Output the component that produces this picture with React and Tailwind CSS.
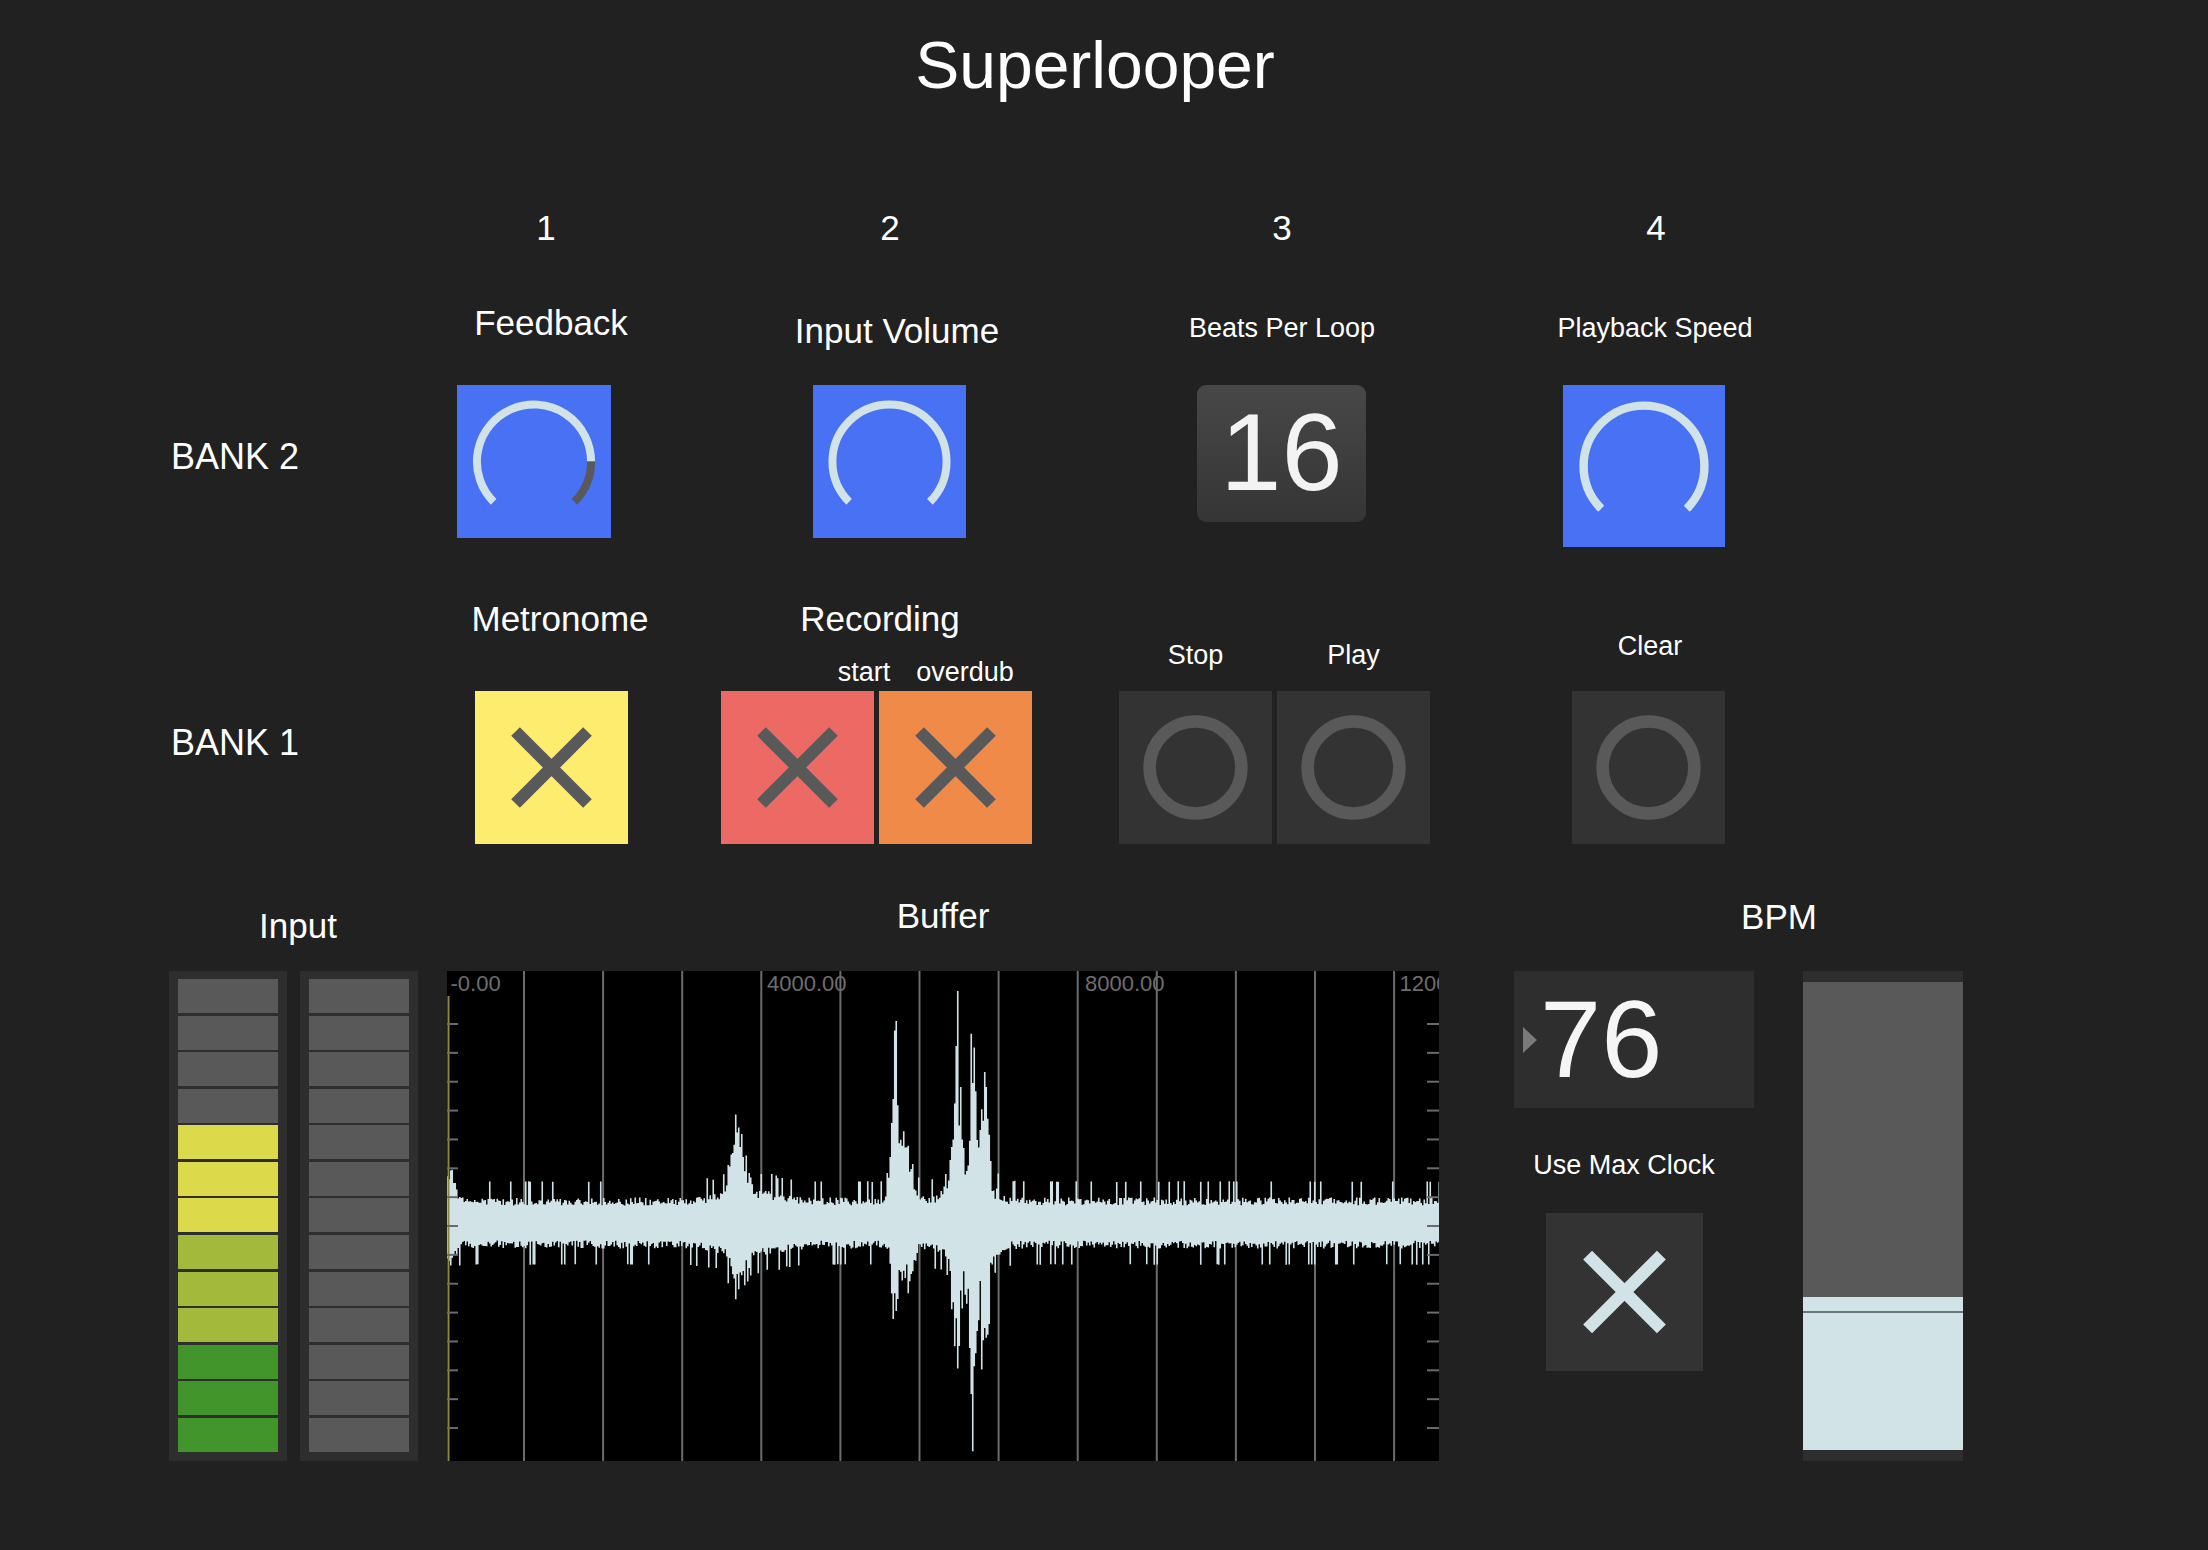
import React from "react";

// small seeded random so the waveform is the same every render
function mulberry32(a) {
  return function () {
    a |= 0;
    a = (a + 0x6d2b79f5) | 0;
    let t = Math.imul(a ^ (a >>> 15), 1 | a);
    t = (t + Math.imul(t ^ (t >>> 7), 61 | t)) ^ t;
    return ((t ^ (t >>> 14)) >>> 0) / 4294967296;
  };
}

const LIGHT = "#d2e3e8";

function KnobArc({ dark }) {
  return (
    <svg viewBox="0 0 100 100" className="h-full w-full">
      {dark ? (
        <>
          <path d="M23.6 76.4 A37.3 37.3 0 1 1 87.3 50" fill="none" stroke={LIGHT} strokeWidth="5.2" />
          <path d="M87.3 50 A37.3 37.3 0 0 1 76.4 76.4" fill="none" stroke="#595959" strokeWidth="5.2" />
        </>
      ) : (
        <path d="M23.6 76.4 A37.3 37.3 0 1 1 76.4 76.4" fill="none" stroke={LIGHT} strokeWidth="5.2" />
      )}
    </svg>
  );
}

function XMark({ color }) {
  return (
    <svg viewBox="0 0 100 100" className="h-full w-full">
      <path d="M26.5 26.5 L73.5 73.5 M73.5 26.5 L26.5 73.5" stroke={color} strokeWidth="8" fill="none" />
    </svg>
  );
}

function Ring() {
  return (
    <svg viewBox="0 0 100 100" className="h-full w-full">
      <circle cx="50" cy="50" r="30" fill="none" stroke="#595959" strokeWidth="8.2" />
    </svg>
  );
}

const cellColor = {
  off: "bg-[#595959]",
  y: "bg-[#dcd94a]",
  yg: "bg-[#a3b93c]",
  g: "bg-[#41952b]",
};

function Meter({ cells }) {
  return (
    <div className="flex h-[490px] w-[118px] flex-col justify-between bg-[#2e2e2e] px-[9px] pb-[9px] pt-[8px]">
      {cells.map((c, i) => (
        <div key={i} className={`h-[34px] w-full ${cellColor[c]}`} />
      ))}
    </div>
  );
}

const meterA = ["off", "off", "off", "off", "y", "y", "y", "yg", "yg", "yg", "g", "g", "g"];
const meterB = Array(13).fill("off");

// bumps: center, up amp, down amp, width
const bumps = [
  [3, 40, 22, 4],
  [291, 80, 50, 6],
  [447, 195, 80, 3],
  [459, 60, 45, 6],
  [509, 180, 100, 3],
  [525, 150, 180, 2.5],
  [537, 140, 110, 3],
  [522, 40, 50, 16],
  [300, 12, 12, 25],
];

function buildWave() {
  const rnd = mulberry32(11);
  let d = "";
  for (let x = 0; x < 992; x += 1.5) {
    let bu = 0;
    let bd = 0;
    for (const [c, a, b, s] of bumps) {
      const g = Math.exp(-((x - c) * (x - c)) / (2 * s * s));
      bu += a * g;
      bd += b * g;
    }
    const r1 = rnd();
    const r2 = rnd();
    const r3 = rnd();
    const r4 = rnd();
    const n1 = r1 > 0.9 ? 1.6 + r1 * 0.3 : 0.8 + r1 * 0.4;
    const n2 = r2 > 0.9 ? 1.6 + r2 * 0.3 : 0.8 + r2 * 0.4;
    const up = 22 * n1 + bu * (0.45 + r3 * 0.6);
    const dn = 22 * n2 + bd * (0.45 + r4 * 0.6);
    d += `M${(x + 0.75).toFixed(2)} ${(252 - up).toFixed(1)}V${(252 + dn).toFixed(1)}`;
  }
  return d;
}

const wavePath = buildWave();
const gridX = Array.from({ length: 12 }, (_, i) => 77 + i * 79.1);
const tickY = Array.from({ length: 15 }, (_, i) => 53 + i * 28.86);

function Waveform() {
  return (
    <svg width="992" height="490" viewBox="0 0 992 490" className="block bg-black">
      {gridX.map((x, i) => (
        <line key={i} x1={x} y1="0" x2={x} y2="490" stroke="#6b6b6b" strokeWidth="2" />
      ))}
      <path d={wavePath} stroke={LIGHT} strokeWidth="1.6" fill="none" />
      <line x1="1.5" y1="25" x2="1.5" y2="490" stroke="#8c8a3f" strokeWidth="2" />
      {tickY.map((y, i) => (
        <g key={i}>
          <line x1="0" y1={y} x2="11" y2={y} stroke="#6b6b6b" strokeWidth="2" />
          <line x1="980" y1={y} x2="992" y2={y} stroke="#6b6b6b" strokeWidth="2" />
        </g>
      ))}
      <g fill="#6e6e6e" fontSize="22" fontFamily="'Liberation Sans', Arial, sans-serif">
        <text x="3.5" y="20">-0.00</text>
        <text x="320" y="20">4000.00</text>
        <text x="638" y="20">8000.00</text>
        <text x="952.5" y="20">12000.00</text>
      </g>
    </svg>
  );
}

export default function App() {
  return (
    <div className="h-[1550px] w-[2208px] overflow-hidden bg-[#212121] font-['Liberation_Sans',Arial,sans-serif] text-white">
      {/* title */}
      <div className="pt-[32px]">
        <h1 className="ml-[795px] w-[600px] text-center text-[66px] font-normal leading-none">Superlooper</h1>
      </div>

      {/* column numbers */}
      <div className="mt-[112px] flex h-[35px] text-[35px] leading-none">
        <div className="ml-[496px] w-[100px] text-center">1</div>
        <div className="ml-[244px] w-[100px] text-center">2</div>
        <div className="ml-[292px] w-[100px] text-center">3</div>
        <div className="ml-[274px] w-[100px] text-center">4</div>
      </div>

      {/* bank 2 */}
      <div className="flex h-[315px] items-start">
        <div className="ml-[171px] mt-[194px] w-[200px] text-[36px] leading-none">BANK 2</div>
        <div className="ml-[70px] flex w-[220px] flex-col items-start">
          <div className="mt-[60px] w-[220px] text-center text-[35px] leading-none">Feedback</div>
          <div className="ml-[16px] mt-[45px] h-[153px] w-[154px] bg-[#4871f4]">
            <KnobArc dark />
          </div>
        </div>
        <div className="ml-[106px] flex w-[260px] flex-col items-start">
          <div className="mt-[68px] w-[260px] text-center text-[35px] leading-none">Input Volume</div>
          <div className="ml-[46px] mt-[37px] h-[153px] w-[153px] bg-[#4871f4]">
            <KnobArc />
          </div>
        </div>
        <div className="ml-[135px] flex w-[240px] flex-col items-start">
          <div className="mt-[70px] w-[240px] text-center text-[27px] leading-none">Beats Per Loop</div>
          <div className="ml-[35px] mt-[43px] h-[137px] w-[169px] rounded-[9px] bg-linear-to-b from-[#484848] to-[#353535] pt-[12px] text-center text-[110px] leading-none text-[#f3f3f3]">
            16
          </div>
        </div>
        <div className="ml-[133px] flex w-[240px] flex-col items-start">
          <div className="mt-[70px] w-[240px] text-center text-[27px] leading-none">Playback Speed</div>
          <div className="ml-[28px] mt-[43px] h-[162px] w-[162px] bg-[#4871f4]">
            <KnobArc />
          </div>
        </div>
      </div>

      {/* bank 1 */}
      <div className="flex h-[320px] items-start">
        <div className="ml-[171px] mt-[165px] w-[200px] text-[36px] leading-none">BANK 1</div>
        <div className="ml-[79px] flex w-[220px] flex-col items-start">
          <div className="mt-[41px] w-[220px] text-center text-[35px] leading-none">Metronome</div>
          <div className="ml-[25px] mt-[55px] h-[153px] w-[153px] bg-[#feec6e]">
            <XMark color="#595959" />
          </div>
        </div>
        <div className="ml-[30px] flex w-[340px] flex-col items-start">
          <div className="ml-[70px] mt-[41px] w-[220px] text-center text-[35px] leading-none">Recording</div>
          <div className="mt-[23px] flex h-[27px] text-[27px] leading-none">
            <div className="ml-[124px] w-[80px] text-center">start</div>
            <div className="ml-[1px] w-[120px] text-center">overdub</div>
          </div>
          <div className="ml-[21px] mt-[5px] flex gap-[5px]">
            <div className="h-[153px] w-[153px] bg-[#ec6964]">
              <XMark color="#595959" />
            </div>
            <div className="h-[153px] w-[153px] bg-[#ef8a48]">
              <XMark color="#595959" />
            </div>
          </div>
        </div>
        <div className="ml-[79px] flex w-[311px] flex-col items-start">
          <div className="mt-[82px] flex h-[27px] text-[27px] leading-none">
            <div className="w-[153px] text-center">Stop</div>
            <div className="ml-[5px] w-[153px] text-center">Play</div>
          </div>
          <div className="mt-[22px] flex gap-[5px]">
            <div className="h-[153px] w-[153px] bg-[#333333]">
              <Ring />
            </div>
            <div className="h-[153px] w-[153px] bg-[#333333]">
              <Ring />
            </div>
          </div>
        </div>
        <div className="ml-[142px] flex w-[156px] flex-col items-start">
          <div className="mt-[73px] w-[156px] text-center text-[27px] leading-none">Clear</div>
          <div className="mt-[31px] h-[153px] w-[153px] bg-[#333333]">
            <Ring />
          </div>
        </div>
      </div>

      {/* input / buffer / bpm */}
      <div className="flex items-start">
        <div className="ml-[169px] flex w-[249px] flex-col items-start">
          <div className="mt-[28px] w-[249px] pl-[9px] text-center text-[35px] leading-none">Input</div>
          <div className="mt-[28px] flex gap-[13px]">
            <Meter cells={meterA} />
            <Meter cells={meterB} />
          </div>
        </div>
        <div className="ml-[29px] flex w-[992px] flex-col items-start">
          <div className="mt-[18px] w-[992px] text-center text-[35px] leading-none">Buffer</div>
          <div className="mt-[38px]">
            <Waveform />
          </div>
        </div>
        <div className="ml-[75px] flex w-[449px] flex-col items-start">
          <div className="mt-[19px] w-[449px] pl-[81px] text-center text-[35px] leading-none">BPM</div>
          <div className="mt-[37px] flex items-start">
            <div className="flex w-[240px] flex-col items-start">
              <div className="flex h-[137px] w-[240px] items-start bg-[#2e2e2e]">
                <svg viewBox="0 0 14 26" className="ml-[9px] mt-[56px] h-[26px] w-[14px]">
                  <path d="M0 0 L14 13 L0 26 Z" fill="#7a7a7a" />
                </svg>
                <div className="ml-[3px] mt-[13px] text-[110px] leading-none text-[#f5f5f5]">76</div>
              </div>
              <div className="mt-[44px] w-[220px] text-center text-[27px] leading-none">Use Max Clock</div>
              <div className="ml-[32px] mt-[34px] h-[158px] w-[157px] bg-[#333333]">
                <XMark color={LIGHT} />
              </div>
            </div>
            <div className="ml-[49px] flex h-[490px] w-[160px] flex-col bg-[#2e2e2e] pt-[11px]">
              <div className="h-[315px] bg-[#595959]" />
              <div className="h-[14px] bg-[#d2e3e8]" />
              <div className="h-[2px] bg-[#6b7479]" />
              <div className="h-[137px] bg-[#d2e3e8]" />
            </div>
          </div>
        </div>
      </div>
    </div>
  );
}
